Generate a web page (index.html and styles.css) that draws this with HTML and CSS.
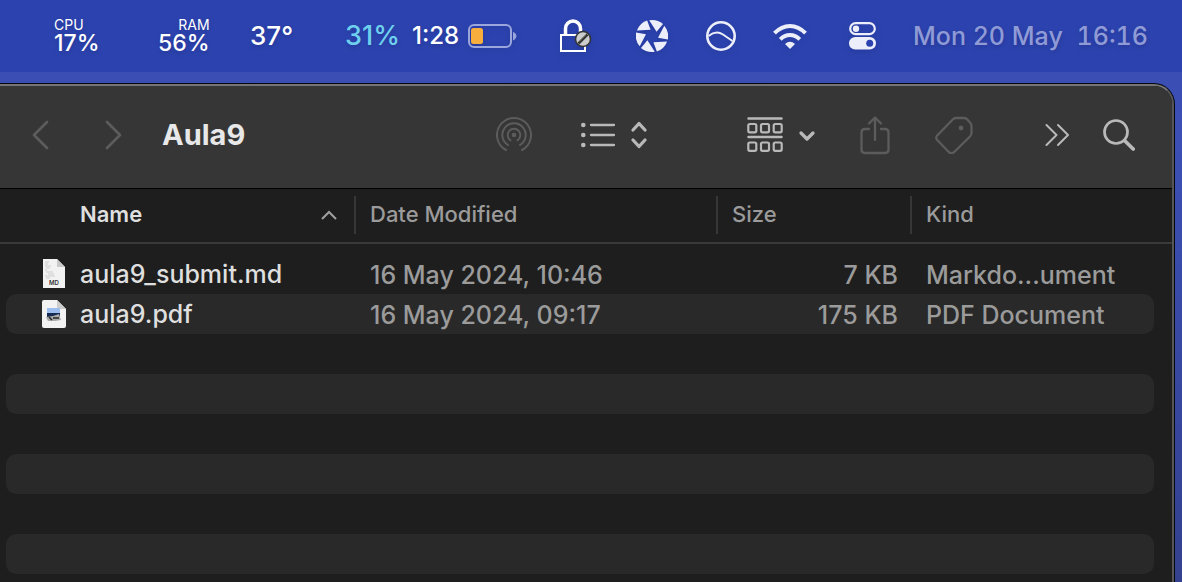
FILE: index.html
```html
<!DOCTYPE html>
<html lang="en">
<head>
<meta charset="utf-8">
<title>Aula9</title>
<link rel="stylesheet" href="styles.css">
</head>
<body>
<header class="menubar">
  <div class="stat"><span class="stat-label">CPU</span><span class="stat-value">17%</span></div>
  <div class="stat stat-end"><span class="stat-label">RAM</span><span class="stat-value">56%</span></div>
  <span class="temp">37°</span>
  <span class="charge">31%</span>
  <span class="remaining">1:28</span>
  <svg class="icon" width="50" height="26" viewBox="0 0 50 26" aria-label="Battery">
    <rect x="1" y="2" width="42" height="22" rx="5" fill="none" stroke="#9ba6dc" stroke-width="2"/>
    <rect x="3" y="5" width="12" height="16" rx="2.5" fill="#f7ae3d"/>
    <path d="M45.500 9.500Q48 10.500 48 13T45.500 17Z" fill="#9ba6dc" stroke="#9ba6dc"/>
  </svg>
  <svg class="icon" width="34" height="36" viewBox="0 0 34 36" aria-label="Lock">
    <rect x="1" y="17" width="24" height="16" fill="none" stroke="#fff" stroke-width="2"/>
    <path d="M5.500 17V10.500a7.500 7.500 0 0 1 15 0V15" fill="none" stroke="#fff" stroke-width="3.500"/>
    <circle cx="23" cy="21" r="7.500" fill="#ccc" stroke="#333" stroke-width="1.500"/>
    <path d="M18.500 25.500L27.500 16.500" stroke="#333" stroke-width="2.500"/>
    <path d="M19 23.500L25.500 17" stroke="#888" stroke-width="1"/>
  </svg>
  <svg class="icon" width="32" height="34" viewBox="-16 -17 32 34" fill="#eceefa" aria-label="Aperture">
    <path id="blade" d="M-2.800-15.800Q5-17.200 11-12L4.600-4.300Z"/>
    <use href="#blade" transform="rotate(60)"/>
    <use href="#blade" transform="rotate(120)"/>
    <use href="#blade" transform="rotate(180)"/>
    <use href="#blade" transform="rotate(240)"/>
    <use href="#blade" transform="rotate(300)"/>
  </svg>
  <svg class="icon" width="30" height="30" viewBox="0 0 30 30" fill="none" stroke="#eceefa" aria-label="Linear">
    <circle cx="15" cy="15" r="13.700" stroke-width="2.600"/>
    <path d="M2.500 15Q10 9 17 13.500L26.500 20" stroke-width="2"/>
  </svg>
  <svg class="icon" width="34" height="26" viewBox="0 0 34 26" fill="none" stroke="#eceefa" stroke-width="4" aria-label="Wi-Fi">
    <path d="M1.500 10.200Q8.500 3 17 3T32.500 10.200"/>
    <path d="M7.300 16.300Q11.500 12 17 12T26.700 16.300"/>
    <path d="M17 26L12 21Q17 16.600 22 21Z" fill="#eceefa" stroke="none"/>
  </svg>
  <svg class="icon" width="28" height="28" viewBox="0 0 28 28" aria-label="Control Centre">
    <rect x="1.200" y="1.200" width="24.600" height="11" rx="5.500" fill="none" stroke="#eceefa" stroke-width="2.200"/>
    <circle cx="7" cy="6.700" r="3.200" fill="#eceefa"/>
    <rect x="0" y="15" width="27" height="12.500" rx="6.250" fill="#eceefa"/>
    <circle cx="20.700" cy="21.200" r="3.500" fill="#2b42ae"/>
  </svg>
  <time class="clock" datetime="2024-05-20T16:16"><span>Mon 20 May</span><span>16:16</span></time>
</header>

<main class="window">
  <div class="toolbar">
    <nav class="nav">
      <button class="tool dim" aria-label="Back"><svg width="17" height="30" viewBox="0 0 17 30"><path d="M15 2L2 15L15 28" stroke-width="2.700"/></svg></button>
      <button class="tool dim" aria-label="Forward"><svg width="17" height="30" viewBox="0 0 17 30"><path d="M2 2L15 15L2 28" stroke-width="2.700"/></svg></button>
    </nav>
    <h1 class="title">Aula9</h1>
    <div class="tools">
      <button class="tool dim" aria-label="AirDrop"><svg width="36" height="36" viewBox="0 0 36 36" stroke-width="2">
        <circle cx="18" cy="18" r="2.300" fill="currentColor" stroke="none"/>
        <path d="M14.500 23.300A6.300 6.300 0 1 1 21.500 23.300"/>
        <path d="M12 28A11.700 11.700 0 1 1 24 28"/>
        <path d="M10 33A17 17 0 1 1 26 33"/>
      </svg></button>
      <button class="tool tool-list" aria-label="List view"><svg width="68" height="30" viewBox="0 0 68 30">
        <g fill="currentColor" stroke="none"><circle cx="2.300" cy="5" r="2.300"/><circle cx="2.300" cy="15" r="2.300"/><circle cx="2.300" cy="25" r="2.300"/></g>
        <path d="M10 5H33M10 15H33M10 25H33" stroke-width="2.300"/>
        <path d="M52 10L58 3.500L64 10M52 20L58 26.500L64 20" stroke-width="3.300"/>
      </svg></button>
      <button class="tool tool-group" aria-label="Group by"><svg width="70" height="36" viewBox="0 0 70 36">
        <path d="M1.500 1.500H34.500M1.500 20H34.500" stroke-width="2.500"/>
        <g stroke-width="2.200"><rect x="1.300" y="7" width="8" height="8.300" rx="1.500"/><rect x="14" y="7" width="8" height="8.300" rx="1.500"/><rect x="26.700" y="7" width="8" height="8.300" rx="1.500"/>
        <rect x="1.300" y="25.500" width="8" height="8.300" rx="1.500"/><rect x="14" y="25.500" width="8" height="8.300" rx="1.500"/><rect x="26.700" y="25.500" width="8" height="8.300" rx="1.500"/></g>
        <path d="M54 16L60 22L66 16" stroke-width="3.300"/>
      </svg></button>
      <button class="tool dim tool-share" aria-label="Share"><svg width="30" height="40" viewBox="0 0 30 40" stroke-width="2.300">
        <path d="M9 14H5Q1.500 14 1.500 17.500V34.500Q1.500 38 5 38H25Q28.500 38 28.500 34.500V17.500Q28.500 14 25 14H21M15 25V3M9 8.500L15 2.500L21 8.500"/>
      </svg></button>
      <button class="tool dim tool-tag" aria-label="Tags"><svg width="38" height="38" viewBox="0 0 38 38" stroke-width="2.300">
        <path d="M20.500 2H29Q31 2 32.300 3.400L35 6.500Q36.500 8 36.500 10V17Q36.500 19 35 20.500L19 36.200Q16.500 38 14 36.200L2.200 24Q0.300 21.800 2.200 19.500L18 3.300Q19 2 20.500 2Z"/>
        <circle cx="26" cy="12" r="2.400" fill="currentColor" stroke="none"/>
      </svg></button>
      <button class="tool tool-more" aria-label="More"><svg width="24" height="24" viewBox="0 0 24 20"><path d="M1.500 0L11.500 10L1.500 20M13 0L23 10L13 20" stroke-width="2"/></svg></button>
      <button class="tool" aria-label="Search"><svg width="32" height="34" viewBox="0 0 32 34"><circle cx="13" cy="14" r="11.500" stroke-width="2.700"/><path d="M22 23L30.200 31" stroke-width="3.700"/></svg></button>
    </div>
  </div>

  <table class="files">
    <colgroup><col class="col-name"><col class="col-date"><col class="col-size"><col class="col-kind"></colgroup>
    <thead>
      <tr>
        <th scope="col"><button class="sort active">Name<svg width="18" height="12" viewBox="0 0 18 12"><path d="M2 11L9 4L16 11" fill="none" stroke="#a0a0a0" stroke-width="2"/></svg></button></th>
        <th scope="col"><button class="sort">Date Modified</button></th>
        <th scope="col"><button class="sort">Size</button></th>
        <th scope="col"><button class="sort">Kind</button></th>
      </tr>
    </thead>
    <tbody>
      <tr>
        <td><div class="file"><svg width="26" height="30" viewBox="0 0 26 30">
          <path d="M2 0H16L24 8V29H2Z" fill="#f2f2f2"/><path d="M16 0L24 8H16Z" fill="#c9c9c9"/>
          <path d="M4 3H8M4 5H7M4 7H10M5 9H9M4 11H6M5 13H12M7 15H13M4 17H14M5 19H9" stroke="#ccc" stroke-width="1"/>
          <text x="13" y="26" class="badge-text">MD</text></svg>aula9_submit.md</div></td>
        <td>16 May 2024, 10:46</td><td>7 KB</td><td>Markdo...ument</td>
      </tr>
      <tr>
        <td><div class="file"><svg width="26" height="30" viewBox="0 0 26 30">
          <path d="M3 1H16L25 10V27Q25 29 23 29H3Q1 29 1 27V3Q1 1 3 1Z" fill="#f2f2f2"/><path d="M16 1L25 10H16Z" fill="#cdcdcd"/>
          <rect x="6" y="9" width="13" height="6" fill="#9dbcf0"/><rect x="6" y="14" width="13" height="4" fill="#172b52"/>
          <path d="M5 18L12 17L18 15L20 21L14 22H7Z" fill="#aaa"/><path d="M8 18L11 21M12 19H18" stroke="#252525" stroke-width="1.500"/></svg>aula9.pdf</div></td>
        <td>16 May 2024, 09:17</td><td>175 KB</td><td>PDF Document</td>
      </tr>
      <tr><td></td><td></td><td></td><td></td></tr>
      <tr><td></td><td></td><td></td><td></td></tr>
      <tr><td></td><td></td><td></td><td></td></tr>
      <tr><td></td><td></td><td></td><td></td></tr>
      <tr><td></td><td></td><td></td><td></td></tr>
      <tr><td></td><td></td><td></td><td></td></tr>
    </tbody>
  </table>
</main>
</body>
</html>
```

FILE: styles.css
```css
* {
  box-sizing: border-box;
}

body {
  margin: 0;
  height: 100vh;
  overflow: hidden;
  display: flex;
  flex-direction: column;
  gap: 12px;
  background: linear-gradient(#3b4eb2, #3b4fb4 25%, #34418f);
  font-family: Inter, "Liberation Sans", sans-serif;
  color: #dfdfdf;
}

.menubar {
  flex: none;
  height: 72px;
  padding-right: 34px;
  display: grid;
  grid-template-columns: 104px 92px 95px 67px 56px 92px 76px 70px 67px 76px 64px 235px;
  justify-content: end;
  align-items: center;
  background: #2c43af;
  color: #fff;
  font-size: 24px;
  font-weight: 500;
  line-height: 28px;
  white-space: nowrap;
  text-shadow: 0 2px 5px rgba(0, 0, 40, 0.2);
}

.stat {
  display: flex;
  flex-direction: column;
  justify-self: start;
}

.stat-end {
  align-items: flex-end;
}

.stat-label {
  font-size: 14px;
  line-height: 14px;
  font-weight: 400;
}

.stat-value {
  font-size: 23px;
  line-height: 22px;
}

.temp {
  font-size: 26px;
}

.charge {
  color: #6ed0ee;
  font-size: 27px;
}

.icon {
  display: block;
  filter: drop-shadow(0 2px 3px rgba(0, 0, 40, 0.15));
}

.clock {
  display: flex;
  justify-content: space-between;
  color: #909bd6;
  font-size: 25px;
  font-variant-numeric: tabular-nums;
}

.window {
  flex: 1;
  min-height: 0;
  margin-right: 8px;
  overflow: hidden;
  background: #1e1e1e;
  border-top: 2px solid #757575;
  border-right: 2px solid #565656;
  border-top-right-radius: 20px;
  box-shadow: 0 0 0 1px #05070f;
}

.toolbar {
  height: 103px;
  padding: 0 37px 4px 32px;
  display: flex;
  align-items: center;
  background: #363636;
  border-bottom: 1px solid #000;
}

.nav {
  display: flex;
  gap: 56px;
}

.title {
  flex: 1;
  margin: 0 0 0 40px;
  font-size: 29px;
  line-height: 36px;
  font-weight: 700;
  color: #e8e8e8;
}

.tools {
  display: flex;
  align-items: center;
  gap: 34px;
}

.tool {
  padding: 0;
  border: 0;
  background: none;
  color: #b9b9b9;
}

.tool svg {
  display: block;
  fill: none;
  stroke: currentColor;
  stroke-linecap: round;
  stroke-linejoin: round;
}

.tool.dim {
  color: #5c5c5c;
}

.tool-list {
  margin-left: 15px;
}

.tool-group {
  margin-left: 64px;
}

.tool-share {
  margin-left: 9px;
}

.tool-tag {
  margin-left: 11px;
}

.tool-more {
  margin-left: 38px;
}

.files {
  width: 100%;
  table-layout: fixed;
  border-collapse: separate;
  border-spacing: 0;
  font-size: 25px;
  font-weight: 500;
  line-height: 32px;
  color: #9b9b9b;
  white-space: nowrap;
}

.col-name {
  width: 356px;
}

.col-date {
  width: 362px;
}

.col-size {
  width: 194px;
}

.files th {
  height: 55px;
  padding: 0 0 2px;
  border-bottom: 2px solid #3a3a3a;
}

.sort {
  width: 100%;
  height: 38px;
  padding: 0 14px 2px;
  display: flex;
  align-items: center;
  justify-content: space-between;
  border: 0;
  border-right: 2px solid #373737;
  background: none;
  color: #9b9b9b;
  font: 500 22px/28px Inter, "Liberation Sans", sans-serif;
}

th:last-child .sort {
  border-right: 0;
}

.active {
  padding: 0 16px 2px 80px;
  color: #dfdfdf;
  font-weight: 600;
}

.files tbody::before {
  content: "";
  display: table-row;
  height: 10px;
}

.files td {
  height: 40px;
  padding: 2px 14px 0;
  background-clip: padding-box;
}

.files td:first-child {
  border-left: 6px solid transparent;
  border-radius: 16px 0 0 16px / 10px 0 0 10px;
  padding-top: 0;
  padding-left: 35px;
}

.files td:nth-child(3) {
  text-align: right;
}

.files td:last-child {
  border-right: 18px solid transparent;
  border-radius: 0 28px 28px 0 / 0 10px 10px 0;
}

.files tbody tr:nth-child(even) td {
  background-color: #292929;
}

.file {
  display: flex;
  align-items: center;
  gap: 13px;
  color: #dfdfdf;
}

.badge-text {
  font-size: 6px;
  font-weight: 600;
  text-anchor: middle;
  fill: #333;
}
```
